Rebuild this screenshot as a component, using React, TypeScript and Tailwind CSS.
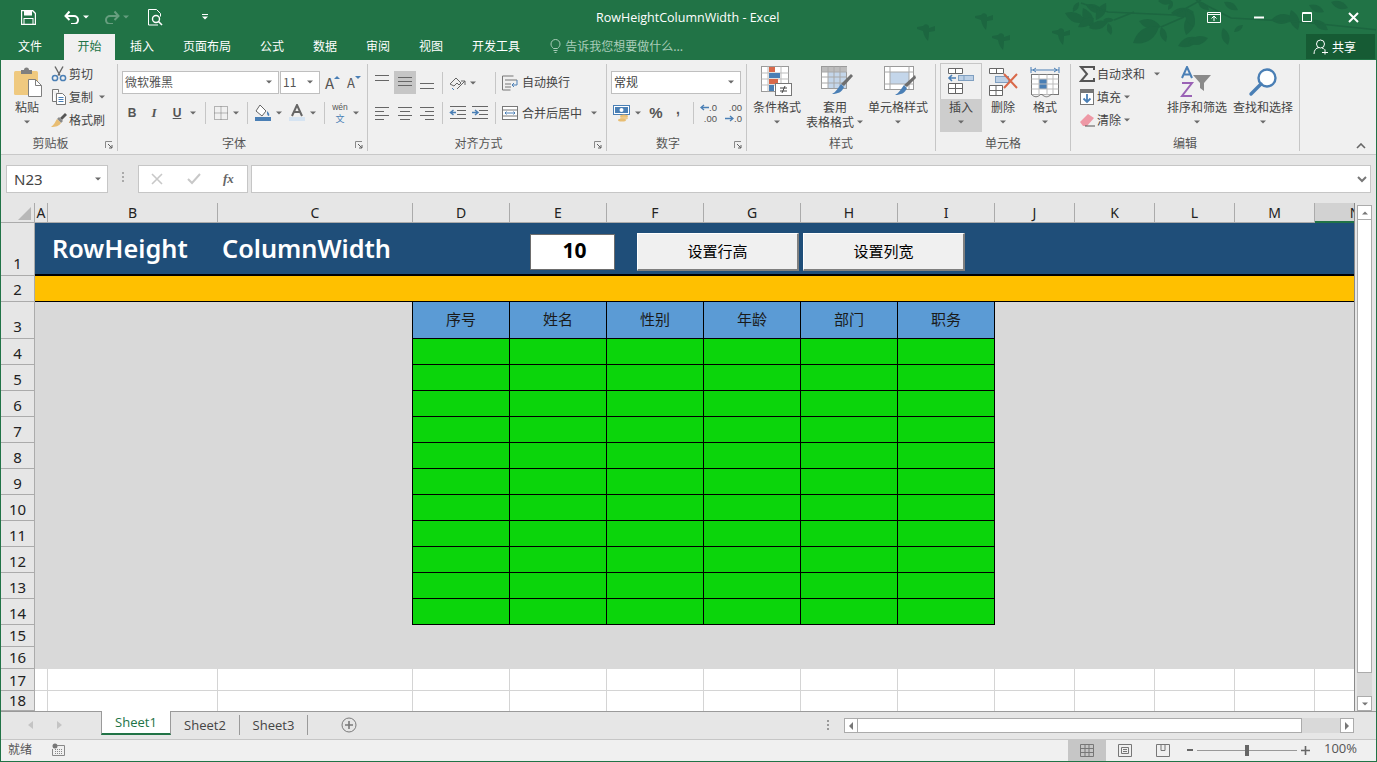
import type { ReactNode } from "react";

const BLUE = "#4a7fb5";

function Caret({ color = "#6a6a6a" }: { color?: string }) {
  return (
    <svg width="8" height="4" viewBox="0 0 8 4" className="shrink-0">
      <path d="M1 0.5h6L4 3.500z" fill={color} />
    </svg>
  );
}

function CaretBox({ className = "" }: { className?: string }) {
  return (
    <span className={`flex w-[8px] justify-center ${className}`}>
      <Caret />
    </span>
  );
}

function Sep({ className = "" }: { className?: string }) {
  return <span className={`h-[22px] w-px shrink-0 bg-[#c6c6c6] ${className}`} />;
}

function Launcher() {
  return (
    <svg width="8" height="8" viewBox="0 0 8 8" className="absolute bottom-[2px] right-[4px]">
      <path d="M0.5 7V0.5H7" fill="none" stroke="#8a8a8a" />
      <path d="M3 3l4 4M7 4v3H4" fill="none" stroke="#5f5f5f" />
    </svg>
  );
}

function Group({ w, label, launcher, children }: { w: string; label: string; launcher?: boolean; children: ReactNode }) {
  return (
    <div className={`relative flex h-[87px] shrink-0 flex-col border-r border-[#c6c6c6] ${w}`}>
      <div className="h-[71px]">{children}</div>
      <div className={`flex h-[16px] items-center justify-center text-[12px] leading-none text-[#555] ${launcher ? "pr-[17px]" : ""}`}>
        {label}
      </div>
      {launcher && <Launcher />}
    </div>
  );
}

function SmallRow({ icon, label, caret, caretMl }: { icon: ReactNode; label: string; caret?: boolean; caretMl?: string }) {
  return (
    <div className="flex h-[23px] items-center">
      <span className="flex w-[18px] justify-center">{icon}</span>
      <span className="ml-[1px] whitespace-nowrap text-[12px] text-[#444]">{label}</span>
      {caret && <CaretBox className={caretMl} />}
    </div>
  );
}

function BigButton({
  w,
  icon,
  lines,
  active,
  inlineCaret,
}: {
  w: string;
  icon: ReactNode;
  lines: string[];
  active?: boolean;
  inlineCaret?: boolean;
}) {
  return (
    <div className={`flex shrink-0 flex-col items-center ${w} ${active ? "-mt-px h-[69px] bg-[#cdcdcd]" : ""}`}>
      <div
        className={`flex w-full items-center justify-center ${
          active ? "h-[36px] border-x border-t border-[#c6c6c6] bg-[#f0f0f0]" : "h-[35px]"
        }`}
      >
        {icon}
      </div>
      <div className="flex h-[15px] items-center whitespace-nowrap text-[12px] text-[#444]">{lines[0]}</div>
      {lines[1] ? (
        <div className="flex h-[15px] items-center whitespace-nowrap text-[12px] text-[#444]">
          {lines[1]}
          {inlineCaret && <CaretBox className="ml-[2px]" />}
        </div>
      ) : (
        <div className="flex h-[15px] items-center">
          <Caret />
        </div>
      )}
    </div>
  );
}

function AlignV({ pos, active }: { pos: "top" | "mid" | "bot"; active?: boolean }) {
  const y = pos === "top" ? [4, 9] : pos === "mid" ? [6, 10, 14] : [12, 17];
  const d = y.map((v) => `M4 ${v}.5h14`).join("");
  return (
    <span className={`flex h-[23px] w-[22px] items-center justify-center ${active ? "bg-[#c6c6c6]" : ""}`}>
      <svg width="22" height="23" viewBox="0 0 22 23">
        <path d={d} stroke="#666" fill="none" />
      </svg>
    </span>
  );
}

function AlignH({ pos }: { pos: "l" | "c" | "r" }) {
  const rows =
    pos === "l"
      ? "M4 5.5h14M4 9.5h9M4 13.5h14M4 17.5h9"
      : pos === "c"
        ? "M4 5.5h14M6 9.5h10M4 13.5h14M6 17.5h10"
        : "M4 5.5h14M9 9.5h9M4 13.5h14M9 17.5h9";
  return (
    <svg width="22" height="23" viewBox="0 0 22 23">
      <path d={rows} stroke="#666" fill="none" />
    </svg>
  );
}

function Indent({ flip }: { flip?: boolean }) {
  return (
    <svg width="18" height="16" viewBox="0 0 18 16">
      <path d="M1 1.500h16M8 5.500h9M8 9.500h9M1 13.500h16" stroke="#666" fill="none" />
      {flip ? (
        <path d="M1 7.500h5M4 5L7 7.500 4 10" stroke={BLUE} strokeWidth="1.5" fill="none" />
      ) : (
        <path d="M7 7.500H2M4.500 5L1.500 7.500l3 2.500" stroke={BLUE} strokeWidth="1.5" fill="none" />
      )}
    </svg>
  );
}

function PasteIcon() {
  return (
    <svg width="32" height="33" viewBox="0 0 32 33">
      <g transform="translate(3 1)">
        <rect x="0" y="5" width="24" height="24" rx="1.5" fill="#efc97f" />
        <path d="M7 4h3a2.500 2.500 0 0 1 5 0h3v4H7z" fill="#7f7f7f" />
        <path d="M14.500 13.500h7l6 6v11h-13z" fill="#fff" stroke="#7f7f7f" />
        <path d="M21.500 13.500v6h6" fill="none" stroke="#7f7f7f" />
      </g>
    </svg>
  );
}

function CutIcon() {
  return (
    <svg width="16" height="16" viewBox="0 0 16 16">
      <path d="M4 0.5l5 9M12 0.5l-5 9" stroke="#666" strokeWidth="1.4" fill="none" />
      <circle cx="4" cy="12" r="2.6" fill="none" stroke={BLUE} strokeWidth="1.5" />
      <circle cx="12" cy="12" r="2.6" fill="none" stroke={BLUE} strokeWidth="1.5" />
    </svg>
  );
}

function CopyIcon() {
  return (
    <svg width="16" height="16" viewBox="0 0 16 16">
      <path d="M1.5 0.5h6v3M5 12.5H1.5v-12" fill="#fff" stroke="#777" />
      <path d="M5.5 4.5h6l3 3v8h-9z" fill="#fff" stroke="#777" />
      <path d="M7.5 8.5h5M7.5 10.5h5M7.5 12.5h5" stroke={BLUE} />
    </svg>
  );
}

function BrushIcon() {
  return (
    <svg width="18" height="16" viewBox="0 0 18 16">
      <path d="M10 6l5-5 2 2-5 5z" fill="#555" />
      <path d="M9 5l4 4-2 2-4-4z" fill="#8a8a8a" />
      <path d="M7 7l4 4c-2 3-5 4-10 4 3-2 4-5 6-8z" fill="#e8bd72" />
    </svg>
  );
}

function BordersIcon() {
  return (
    <svg width="14" height="14" viewBox="0 0 14 14">
      <path d="M0.5 0.5h13v13h-13zM7 0.5v13M0.5 7h13" fill="none" stroke="#777" strokeDasharray="1 1" />
    </svg>
  );
}

function FillIcon() {
  return (
    <svg width="18" height="18" viewBox="0 0 18 18">
      <path d="M6 1l6 6-4 5-6-5z" fill="#fff" stroke="#666" />
      <path d="M13 7c1 1 3 3 2 5-2 0-2-3-2-5z" fill={BLUE} />
      <rect x="1" y="13" width="16" height="4" fill={BLUE} />
    </svg>
  );
}

function ColorAIcon() {
  return (
    <svg width="16" height="18" viewBox="0 0 16 18">
      <rect x="0" y="13" width="16" height="4" fill="#d6e4f2" />
      <path d="M3 12L8 1l5 11M5 8h6" fill="none" stroke="#666" strokeWidth="2" />
    </svg>
  );
}

function OrientIcon() {
  return (
    <svg width="18" height="16" viewBox="0 0 18 16">
      <path d="M1 9l6-6 5 5-2 2-2-2-3 3z" fill="none" stroke="#666" />
      <path d="M8 14L16 6M16 6h-4M16 6v4" fill="none" stroke="#666" />
      <path d="M3 13l2 2" stroke={BLUE} />
    </svg>
  );
}

function WrapIcon() {
  return (
    <svg width="16" height="16" viewBox="0 0 16 16">
      <path d="M0.5 1h11M0.5 1v14h8M3 5h12M3 9h6M3 12h6" fill="none" stroke="#777" />
      <path d="M15 5v5h-5M12 8l-2 2 2 2" fill="none" stroke={BLUE} />
    </svg>
  );
}

function MergeIcon() {
  return (
    <svg width="16" height="16" viewBox="0 0 16 16">
      <rect x="0.5" y="1.5" width="15" height="13" fill="#fff" stroke="#777" />
      <path d="M0.5 5h15M0.5 11h15" stroke="#777" />
      <path d="M3 8h10M4.5 6.5L3 8l1.5 1.5M11.5 6.5L13 8l-1.5 1.5" fill="none" stroke={BLUE} />
    </svg>
  );
}

function MoneyIcon() {
  return (
    <svg width="18" height="17" viewBox="0 0 18 17">
      <rect x="0.5" y="0.5" width="16" height="9" fill="#fff" stroke={BLUE} />
      <rect x="2" y="2" width="13" height="6" fill={BLUE} />
      <circle cx="8.5" cy="5" r="2" fill="#fff" />
      <ellipse cx="11" cy="11" rx="4" ry="1.6" fill="#e8bd72" />
      <ellipse cx="11" cy="13" rx="4" ry="1.6" fill="#efcb8c" />
      <ellipse cx="9" cy="15" rx="4" ry="1.6" fill="#e8bd72" />
    </svg>
  );
}

function DecimalIcon({ more }: { more?: boolean }) {
  return (
    <span className="flex h-[22px] w-[18px] flex-col font-['Liberation_Sans',sans-serif] text-[9.5px] leading-[11px] text-[#555]">
      {more ? (
        <>
          <span className="text-right">.00</span>
          <span className="flex items-center justify-end">
            <svg width="9" height="7" viewBox="0 0 9 7">
              <path d="M0 3.5h7M5 1l3 2.5L5 6" fill="none" stroke={BLUE} strokeWidth="1.3" />
            </svg>
            .0
          </span>
        </>
      ) : (
        <>
          <span className="flex items-center justify-end">
            <svg width="9" height="7" viewBox="0 0 9 7">
              <path d="M9 3.5H2M4 1L1 3.5 4 6" fill="none" stroke={BLUE} strokeWidth="1.3" />
            </svg>
            .0
          </span>
          <span className="text-right">.00</span>
        </>
      )}
    </span>
  );
}

function CondIcon() {
  return (
    <svg width="32" height="32" viewBox="0 0 32 32">
      <rect x="0.5" y="0.5" width="27" height="25" fill="#fff" stroke="#9a9a9a" />
      <path d="M7 0.5v25M20 0.5v25M0.5 7h27M0.5 13h27M0.5 19h27" stroke="#bdbdbd" />
      <rect x="8" y="1" width="6" height="5" fill="#d9694a" />
      <rect x="8" y="7" width="11" height="5" fill={BLUE} />
      <rect x="8" y="13" width="9" height="5" fill="#d9694a" />
      <rect x="8" y="19" width="5" height="6" fill={BLUE} />
      <rect x="14.5" y="17.5" width="16" height="12" fill="#fff" stroke="#777" />
      <path d="M19 22h7M19 25h7M24 20l-3 7" stroke="#444" fill="none" />
    </svg>
  );
}

function TableIcon() {
  return (
    <svg width="32" height="32" viewBox="0 0 32 32" className="ml-[3px]">
      <rect x="0.5" y="0.5" width="25" height="22" fill="#fff" stroke="#9a9a9a" />
      <rect x="1" y="1" width="25" height="5" fill="#bdbdbd" />
      <rect x="7" y="6" width="18" height="16" fill="#c4d6ea" />
      <path d="M7 0.5v22M13 0.5v22M19 0.5v22M0.5 6h25M0.5 11h25M0.5 17h25" stroke="#a8a8a8" />
      <path d="M30 8l2 2-9 10-3-2z" fill="#6e6e6e" />
      <path d="M20 18l3 3c-2 5-6 7-12 7 4-2 6-6 9-10z" fill={BLUE} />
    </svg>
  );
}

function CellStyleIcon() {
  return (
    <svg width="32" height="32" viewBox="0 0 32 32" className="ml-[4px]">
      <rect x="0.5" y="0.5" width="29" height="23" fill="#fff" stroke="#9a9a9a" />
      <rect x="6" y="6" width="19" height="12" fill="#c4d6ea" />
      <path d="M6 0.5v23M25 0.5v23M0.5 6h29M0.5 18h29" stroke="#a8a8a8" />
      <path d="M31 9l1 3-9 9-3-2z" fill="#6e6e6e" />
      <path d="M20 19l3 3c-2 5-6 7-12 7 4-2 6-6 9-10z" fill={BLUE} />
    </svg>
  );
}

function InsertIcon() {
  return (
    <svg width="28" height="30" viewBox="0 0 28 30">
      <path d="M1.5 1.5h14v5h-14zM8.5 1.5v5M1.5 16.5h14v10h-14zM8.5 16.5v10M1.5 21.5h14" fill="#fff" stroke="#666" />
      <rect x="11.5" y="8.5" width="15" height="5" fill="#bcd0e6" stroke="#7f9fc0" />
      <path d="M17 8.5v5" stroke="#7f9fc0" />
      <path d="M9 11H2M5 8l-3 3 3 3" fill="none" stroke={BLUE} strokeWidth="1.6" />
    </svg>
  );
}

function DeleteIcon() {
  return (
    <svg width="30" height="30" viewBox="0 0 30 30">
      <path d="M1.5 1.5h14v5h-14zM8.5 1.5v5M1.5 18.5h13v10h-13zM8 18.5v10M1.5 23.5h13" fill="#fff" stroke="#666" />
      <rect x="7.5" y="9.5" width="13" height="6" fill="#bcd0e6" stroke="#7f9fc0" />
      <path d="M16 7l13 14M29 7L16 21" stroke="#d9694a" strokeWidth="2" />
    </svg>
  );
}

function FormatIcon() {
  return (
    <svg width="30" height="32" viewBox="0 0 30 32">
      <path d="M1 4h28M1 1v6M29 1v6" stroke={BLUE} fill="none" />
      <path d="M6 2L3 4l3 2M24 2l3 2-3 2" stroke={BLUE} fill="none" />
      <rect x="1.5" y="8.5" width="27" height="20" fill="#fff" stroke="#777" />
      <rect x="9" y="13" width="8" height="10" fill={BLUE} />
      <path d="M9 8.5v20M17 8.5v20M23 8.5v20M1.5 13h27M1.5 18h27M1.5 23h27" stroke="#bdbdbd" fill="none" />
      <path d="M1.5 28.5c3 3 6 3 9 0M12 28.5c3 3 6 3 9 0" stroke="#777" fill="#f0f0f0" />
    </svg>
  );
}

function SumIcon() {
  return (
    <svg width="16" height="16" viewBox="0 0 16 16">
      <path d="M15 4V1H2l6 7-6 7h13v-3" fill="none" stroke="#555" strokeWidth="2" />
    </svg>
  );
}

function FillDownIcon() {
  return (
    <svg width="14" height="16" viewBox="0 0 14 16">
      <rect x="0.5" y="0.5" width="13" height="15" fill="#fff" stroke="#777" />
      <rect x="1" y="1" width="12" height="3" fill="#777" />
      <path d="M7 5v8M3.5 9.5L7 13l3.5-3.5" fill="none" stroke={BLUE} strokeWidth="1.8" />
    </svg>
  );
}

function EraserIcon() {
  return (
    <svg width="16" height="14" viewBox="0 0 16 14">
      <path d="M1 9l8-8 6 4-7 8H4z" fill="#ee98a5" />
      <path d="M6 13h10" stroke="#555" />
    </svg>
  );
}

function SortIcon() {
  return (
    <svg width="34" height="32" viewBox="0 0 34 32">
      <path d="M2 12L7 1l5 11M4 8.5h6" fill="none" stroke={BLUE} strokeWidth="2" />
      <path d="M2 17h10L2 30h10" fill="none" stroke="#9a62b5" strokeWidth="2" />
      <path d="M13 9h18l-7 8v8l-4-3v-5z" fill="#8a8a8a" />
    </svg>
  );
}

function SearchIcon() {
  return (
    <svg width="30" height="30" viewBox="0 0 30 30">
      <circle cx="19" cy="11" r="8.5" fill="#fff" stroke={BLUE} strokeWidth="2.4" />
      <path d="M13 17L3 27" stroke={BLUE} strokeWidth="3.4" strokeLinecap="round" />
    </svg>
  );
}

function WinIcon({ kind }: { kind: "ribbon" | "min" | "max" | "close" }) {
  if (kind === "ribbon")
    return (
      <svg width="14" height="11" viewBox="0 0 14 11">
        <path d="M0.5 0.5h13v10H0.5zM0 2.5h14M7 9V4.5M4.5 6.5L7 4l2.5 2.5" fill="none" stroke="#fff" />
      </svg>
    );
  if (kind === "min")
    return (
      <svg width="10" height="11" viewBox="0 0 10 11">
        <path d="M0 5.5h10" stroke="#fff" strokeWidth="2" />
      </svg>
    );
  if (kind === "max")
    return (
      <svg width="10" height="10" viewBox="0 0 10 10">
        <path d="M0.5 0.5h9v9h-9zM0 1.5h10" fill="none" stroke="#fff" />
      </svg>
    );
  return (
    <svg width="11" height="11" viewBox="0 0 11 11">
      <path d="M1 1l9 9M10 1l-9 9" stroke="#fff" strokeWidth="2" />
    </svg>
  );
}

// leaves of the title bar pattern, from and to points of each leaf
const leaves = [
  [1064, 13, 1085, 22], [1082, 8, 1092, 28], [1077, 27, 1093, 18], [1085, 5, 1102, 12], [1105, 3, 1095, 20],
  [1088, 28, 1107, 22], [1102, 20, 1113, 20], [1107, 23, 1110, 35], [1078, 2, 1072, 12], [1138, 21, 1160, 27],
  [1158, 27, 1132, 43], [1160, 27, 1165, 42], [1170, 13, 1193, 12], [1192, 12, 1185, 35], [1198, 38, 1177, 46],
  [1157, 1, 1172, 2], [1172, 2, 1167, 10], [1223, 2, 1237, 10], [1222, 28, 1227, 45], [1233, 32, 1242, 25],
  [1270, 20, 1293, 18], [1290, 10, 1297, 30], [1308, 5, 1323, 12], [1312, 20, 1327, 30], [1330, 2, 1347, 8],
  [1185, 10, 1193, 27], [1187, 43, 1207, 38], [1197, 2, 1208, 10],
];

function leafPath([x1, y1, x2, y2]: number[]) {
  const mx = (x1 + x2) / 2;
  const my = (y1 + y2) / 2;
  const nx = (y2 - y1) * 0.42;
  const ny = (x1 - x2) * 0.42;
  return `M${x1} ${y1}Q${mx + nx} ${my + ny} ${x2} ${y2}Q${mx - nx} ${my - ny} ${x1} ${y1}Z`;
}

function Bird({ x, y }: { x: number; y: number }) {
  return (
    <path
      transform={`translate(${x} ${y})`}
      d="M-6 -1L0 -2A3.500 3.500 0 0 1 6 -2L6 0 12 -2 12 3 6 4Q6 9 5 13 1 9 0 3L-6 1Z"
    />
  );
}

function TitleDecor() {
  return (
    <svg className="pointer-events-none absolute left-0 top-0" width="1377" height="60" viewBox="0 0 1377 60">
      <g fill="#1c6640">
        {leaves.map((l, i) => (
          <path key={i} d={leafPath(l)} />
        ))}
        <Bird x={1057} y={32} />
        <Bird x={997} y={37} />
        <Bird x={980} y={17} />
        <Bird x={922} y={28} />
      </g>
      <path
        d="M1080 3L1107 12L1173 15L1200 0M1133 12L1113 20M1183 17L1160 27M1195 0L1230 18L1300 22L1377 30"
        fill="none"
        stroke="#1c6640"
        strokeWidth="1.5"
      />
    </svg>
  );
}

function TitleBar() {
  return (
    <div className="relative flex h-[34px] items-center text-white">
      <span className="ml-[20px] flex w-[15px] justify-center">
        <svg width="15" height="15" viewBox="0 0 15 15">
          <path d="M0.5 0.5h11l3 3v11H0.5z" fill="none" stroke="#fff" strokeWidth="1.4" />
          <rect x="3" y="1" width="8" height="4.5" fill="#fff" />
          <rect x="3" y="8.5" width="9" height="6" fill="none" stroke="#fff" />
        </svg>
      </span>
      <span className="ml-[28px] flex w-[16px] justify-center">
        <svg width="16" height="14" viewBox="0 0 16 14">
          <path d="M2 6h8a4 4 0 0 1 0 8H7M5.5 1.5L1.5 6l4 4" fill="none" stroke="#fff" strokeWidth="2" />
        </svg>
      </span>
      <span className="ml-[2px] flex w-[8px] justify-center">
        <Caret color="#fff" />
      </span>
      <span className="ml-[14px] flex w-[16px] justify-center opacity-40">
        <svg width="16" height="14" viewBox="0 0 16 14">
          <path d="M14 6H6a4 4 0 0 0 0 8h3M10.5 1.5l4 4.5-4 4" fill="none" stroke="#cfe0d6" strokeWidth="2" />
        </svg>
      </span>
      <span className="ml-[2px] flex w-[8px] justify-center opacity-30">
        <Caret color="#fff" />
      </span>
      <span className="ml-[18px] flex w-[16px] justify-center">
        <svg width="16" height="17" viewBox="0 0 16 17">
          <path d="M10 16H0.5V0.5h8l4 4v3" fill="none" stroke="#fff" />
          <circle cx="8" cy="10" r="3.5" fill="none" stroke="#fff" strokeWidth="1.4" />
          <path d="M10.5 12.5l3.5 3.5" stroke="#fff" strokeWidth="1.6" />
        </svg>
      </span>
      <span className="ml-[37px] flex w-[8px] flex-col items-center gap-[1px]">
        <span className="h-px w-[6px] bg-white" />
        <Caret color="#fff" />
      </span>
      <span className="absolute left-[595px] top-[10px] whitespace-nowrap font-['Open_Sans',sans-serif] text-[12.500px] leading-[16px] text-white">
        RowHeightColumnWidth - Excel
      </span>
      <div className="ml-auto flex items-center">
        <span className="flex w-[14px] justify-center">
          <WinIcon kind="ribbon" />
        </span>
        <span className="ml-[33px] flex w-[10px] justify-center">
          <WinIcon kind="min" />
        </span>
        <span className="ml-[38px] flex w-[10px] justify-center">
          <WinIcon kind="max" />
        </span>
        <span className="ml-[36px] mr-[17px] flex w-[11px] justify-center">
          <WinIcon kind="close" />
        </span>
      </div>
    </div>
  );
}

function TabRow() {
  const tabs = [
    { name: "插入", cls: "ml-[15px]" },
    { name: "页面布局", cls: "ml-[29px]" },
    { name: "公式", cls: "ml-[29px]" },
    { name: "数据", cls: "ml-[29px]" },
    { name: "审阅", cls: "ml-[29px]" },
    { name: "视图", cls: "ml-[29px]" },
    { name: "开发工具", cls: "ml-[29px]" },
  ];
  return (
    <div className="relative flex h-[26px] items-start text-[12px] leading-[24px] text-white">
      <span className="ml-[17px]">文件</span>
      <span className="ml-[22px] flex h-[26px] w-[51px] justify-center bg-[#f0f0f0] text-[#217346]">开始</span>
      {tabs.map((t) => (
        <span key={t.name} className={t.cls}>
          {t.name}
        </span>
      ))}
      <span className="ml-[29px] mt-[5px] flex w-[12px] justify-center">
        <svg width="11" height="14" viewBox="0 0 11 14">
          <path d="M3.5 9.5C2 8 1 7 1 5a4.5 4.5 0 0 1 9 0c0 2-1 3-2.500 4.500zM3.500 11.500h4M4.500 13.500h2" fill="none" stroke="#a9cdb9" />
        </svg>
      </span>
      <span className="ml-[4px] text-[#a9cdb9]">告诉我您想要做什么...</span>
      <div className="ml-auto mr-px flex h-[25px] w-[69px] items-center bg-[#165b34] pl-[7px]">
        <svg width="16" height="16" viewBox="0 0 16 16">
          <circle cx="7.500" cy="5" r="4" fill="none" stroke="#fff" />
          <path d="M1 15c0-4 2-6 5-6.500M9 9c1 .3 2 .8 2.500 1.500M9 13.500h6M12 10.500v5" fill="none" stroke="#fff" />
        </svg>
        <span className="ml-[3px] text-white">共享</span>
      </div>
    </div>
  );
}

function Ribbon() {
  return (
    <div className="relative flex h-[95px] border-b border-[#c8c8c8] bg-[#f0f0f0] pt-[4px]">
      <Group w="w-[117px]" label="剪贴板" launcher>
        <div className="flex">
          <BigButton w="w-[44px] ml-[4px]" icon={<PasteIcon />} lines={["粘贴"]} />
          <div className="-mt-[2px] ml-[1px]">
            <SmallRow icon={<CutIcon />} label="剪切" />
            <SmallRow icon={<CopyIcon />} label="复制" caret caretMl="ml-[5px]" />
            <SmallRow icon={<BrushIcon />} label="格式刷" />
          </div>
        </div>
      </Group>
      <Group w="w-[250px]" label="字体" launcher>
        <div className="mt-[7px] flex h-[23px] items-center">
          <div className="ml-[4px] flex h-[23px] w-[157px] items-center justify-between border border-[#bfbfbf] bg-white pb-[2px] pl-[2px] pr-[5px] text-[12px] text-[#555]">
            微软雅黑
            <Caret />
          </div>
          <div className="ml-px flex h-[23px] w-[40px] items-center justify-between border border-[#bfbfbf] bg-white pb-[2px] pl-[2px] pr-[5px] text-[12px] text-[#555]">
            11
            <Caret />
          </div>
          <span className="ml-[5px] flex w-[16px] text-[15px] leading-none text-[#555]">
            A
            <svg width="6" height="3" viewBox="0 0 6 3" className="mt-px">
              <path d="M0 3h6L3 0z" fill={BLUE} />
            </svg>
          </span>
          <span className="ml-[6px] flex w-[16px] items-end text-[13px] leading-none text-[#555]">
            A
            <svg width="6" height="3" viewBox="0 0 6 3" className="mb-[10px]">
              <path d="M0 0h6L3 3z" fill={BLUE} />
            </svg>
          </span>
        </div>
        <div className="mt-[8px] flex h-[22px] items-center text-[#555]">
          <span className="ml-[3px] w-[22px] text-center font-['Liberation_Sans',sans-serif] text-[12px] font-bold">B</span>
          <span className="w-[22px] text-center font-['Liberation_Serif',serif] text-[13px] font-bold italic">I</span>
          <span className="w-[24px] text-center font-['Liberation_Sans',sans-serif] text-[12px] font-bold underline">U</span>
          <CaretBox />
          <Sep className="ml-[8px]" />
          <span className="ml-[7px] flex w-[16px] justify-center">
            <BordersIcon />
          </span>
          <CaretBox className="ml-[3px]" />
          <Sep className="ml-[7px]" />
          <span className="ml-[6px] flex w-[18px] justify-center">
            <FillIcon />
          </span>
          <CaretBox className="ml-[3px]" />
          <span className="ml-[6px] flex w-[16px] justify-center">
            <ColorAIcon />
          </span>
          <CaretBox className="ml-[4px]" />
          <Sep className="ml-[7px]" />
          <span className="ml-[5px] flex h-[22px] w-[20px] flex-col items-center text-[9px] text-[#555]">
            <span className="font-['Liberation_Sans',sans-serif] text-[8.500px] leading-[10px]">wén</span>
            <span className="leading-[13px] text-[#4a7fb5]">文</span>
          </span>
          <CaretBox className="ml-[2px]" />
        </div>
      </Group>
      <Group w="w-[239px]" label="对齐方式" launcher>
        <div className="mt-[7px] flex h-[23px] items-center">
          <span className="ml-[3px] flex">
            <AlignV pos="top" />
            <span className="ml-px">
              <AlignV pos="mid" active />
            </span>
            <AlignV pos="bot" />
          </span>
          <Sep className="ml-[4px]" />
          <span className="ml-[6px] flex w-[18px] justify-center">
            <OrientIcon />
          </span>
          <CaretBox className="ml-[2px]" />
          <Sep className="ml-[18px]" />
          <span className="ml-[6px] flex w-[16px] justify-center">
            <WrapIcon />
          </span>
          <span className="ml-[4px] pb-[2px] text-[12px] text-[#444]">自动换行</span>
        </div>
        <div className="mt-[8px] flex h-[22px] items-center">
          <span className="ml-[3px] flex">
            <AlignH pos="l" />
            <span className="ml-px">
              <AlignH pos="c" />
            </span>
            <AlignH pos="r" />
          </span>
          <Sep className="ml-[4px]" />
          <span className="ml-[6px] flex w-[18px] justify-center">
            <Indent />
          </span>
          <span className="ml-[4px] flex w-[18px] justify-center">
            <Indent flip />
          </span>
          <Sep className="ml-[6px]" />
          <span className="ml-[6px] flex w-[16px] justify-center">
            <MergeIcon />
          </span>
          <span className="ml-[4px] text-[12px] text-[#444]">合并后居中</span>
          <CaretBox className="ml-[8px]" />
        </div>
      </Group>
      <Group w="w-[140px]" label="数字" launcher>
        <div className="ml-[4px] mt-[7px] flex h-[23px] w-[130px] items-center justify-between border border-[#bfbfbf] bg-white pb-[2px] pl-[2px] pr-[5px] text-[12px] text-[#444]">
          常规
          <Caret />
        </div>
        <div className="mt-[8px] flex h-[22px] items-center text-[#555]">
          <span className="ml-[5px] flex w-[20px] justify-center">
            <MoneyIcon />
          </span>
          <CaretBox className="ml-[2px]" />
          <span className="ml-[6px] w-[16px] text-center font-['Liberation_Sans',sans-serif] text-[15px] font-bold">%</span>
          <span className="-mt-[8px] ml-[8px] w-[12px] text-center font-['Liberation_Sans',sans-serif] text-[14px] font-bold">,</span>
          <Sep className="ml-[9px]" />
          <span className="ml-[5px]">
            <DecimalIcon />
          </span>
          <span className="ml-[7px]">
            <DecimalIcon more />
          </span>
        </div>
      </Group>
      <Group w="w-[189px]" label="样式">
        <div className="flex">
          <BigButton w="w-[56px] ml-[2px]" icon={<CondIcon />} lines={["条件格式"]} />
          <BigButton w="w-[60px]" icon={<TableIcon />} lines={["套用", "表格格式"]} inlineCaret />
          <BigButton w="w-[66px]" icon={<CellStyleIcon />} lines={["单元格样式"]} />
        </div>
      </Group>
      <Group w="w-[135px]" label="单元格">
        <div className="flex">
          <span className="w-[4px]" />
          <BigButton w="w-[42px]" icon={<InsertIcon />} lines={["插入"]} active />
          <BigButton w="w-[42px]" icon={<DeleteIcon />} lines={["删除"]} />
          <BigButton w="w-[42px]" icon={<FormatIcon />} lines={["格式"]} />
        </div>
      </Group>
      <Group w="w-[229px]" label="编辑">
        <div className="flex">
          <div className="-mt-[2px] ml-[7px] w-[86px]">
            <SmallRow icon={<SumIcon />} label="自动求和" caret caretMl="ml-[8px]" />
            <SmallRow icon={<FillDownIcon />} label="填充" caret caretMl="ml-[2px]" />
            <SmallRow icon={<EraserIcon />} label="清除" caret caretMl="ml-[2px]" />
          </div>
          <BigButton w="w-[66px]" icon={<SortIcon />} lines={["排序和筛选"]} />
          <BigButton w="w-[66px]" icon={<SearchIcon />} lines={["查找和选择"]} />
        </div>
      </Group>
      <svg width="10" height="6" viewBox="0 0 10 6" className="absolute right-[10px] top-[83px]">
        <path d="M1 5l4-4 4 4" fill="none" stroke="#666" strokeWidth="1.6" />
      </svg>
    </div>
  );
}

function FormulaBar() {
  return (
    <div className="flex h-[48px] items-start bg-[#e6e6e6] pt-[10px]">
      <div className="ml-[5px] flex h-[28px] w-[102px] items-center justify-between border border-[#c6c6c6] bg-white pl-[7px] pr-[5px] font-['Noto_Sans',sans-serif] text-[15px] text-[#444]">
        N23
        <Caret />
      </div>
      <span className="ml-[14px] mt-[7px] flex w-[3px] flex-col gap-[2px]">
        <span className="h-[2px] w-[2px] bg-[#aaa]" />
        <span className="h-[2px] w-[2px] bg-[#aaa]" />
        <span className="h-[2px] w-[2px] bg-[#aaa]" />
      </span>
      <div className="ml-[13px] flex h-[28px] w-[110px] items-center border border-[#c6c6c6] bg-white">
        <svg width="12" height="12" viewBox="0 0 12 12" className="ml-[12px]">
          <path d="M1 1l10 10M11 1L1 11" stroke="#c8c8c8" strokeWidth="1.6" />
        </svg>
        <svg width="14" height="12" viewBox="0 0 14 12" className="ml-[24px]">
          <path d="M1 6l4 4 8-9" fill="none" stroke="#c8c8c8" strokeWidth="2" />
        </svg>
        <span className="ml-[22px] font-['Liberation_Serif',serif] text-[13px] font-bold italic text-[#666]">fx</span>
      </div>
      <div className="ml-[3px] flex h-[28px] w-[1120px] items-center justify-end border border-[#c6c6c6] bg-white pr-[3px]">
        <svg width="10" height="7" viewBox="0 0 10 7">
          <path d="M1 1l4 4 4-4" fill="none" stroke="#777" strokeWidth="2" />
        </svg>
      </div>
    </div>
  );
}

const columns = [
  { name: "A", w: "w-[13px]" },
  { name: "B", w: "w-[170px]" },
  { name: "C", w: "w-[195px]" },
  { name: "D", w: "w-[97px]" },
  { name: "E", w: "w-[97px]" },
  { name: "F", w: "w-[97px]" },
  { name: "G", w: "w-[97px]" },
  { name: "H", w: "w-[97px]" },
  { name: "I", w: "w-[97px]" },
  { name: "J", w: "w-[80px]" },
  { name: "K", w: "w-[80px]" },
  { name: "L", w: "w-[80px]" },
  { name: "M", w: "w-[80px]" },
];

const rowHeads = [
  { n: 1, h: "h-[53px] pb-[2px]" },
  { n: 2, h: "h-[26px] pb-[2px]" },
  { n: 3, h: "h-[37px] pb-[2px]" },
  { n: 4, h: "h-[26px] pb-px" },
  { n: 5, h: "h-[26px] pb-px" },
  { n: 6, h: "h-[26px] pb-px" },
  { n: 7, h: "h-[26px] pb-px" },
  { n: 8, h: "h-[26px] pb-px" },
  { n: 9, h: "h-[26px] pb-px" },
  { n: 10, h: "h-[26px] pb-px" },
  { n: 11, h: "h-[26px] pb-px" },
  { n: 12, h: "h-[26px] pb-px" },
  { n: 13, h: "h-[26px] pb-px" },
  { n: 14, h: "h-[26px] pb-px" },
  { n: 15, h: "h-[22px] pb-px" },
  { n: 16, h: "h-[22px] pb-px" },
  { n: 17, h: "h-[22px]" },
  { n: 18, h: "h-[20px]" },
];

const tableHead = ["序号", "姓名", "性别", "年龄", "部门", "职务"];
const HEAD_FONT = "font-['Noto_Sans',sans-serif]";

function ColumnHeader() {
  return (
    <div className={`flex h-[20px] ${HEAD_FONT} text-[14px] leading-[20px] text-[#222]`}>
      <div className="flex w-[34px] shrink-0 items-end justify-end border-b border-r border-[#ababab] pb-[2px] pr-[3px]">
        <svg width="13" height="13" viewBox="0 0 13 13">
          <path d="M13 0v13H0z" fill="#b8b8b8" />
        </svg>
      </div>
      {columns.map((c) => (
        <div key={c.name} className={`shrink-0 border-b border-r border-[#ababab] text-center ${c.w}`}>
          {c.name}
        </div>
      ))}
      <div className="w-[39px] shrink-0 overflow-hidden border-b-2 border-[#217346] bg-[#d2d2d2]">
        <div className="w-[80px] text-center">N</div>
      </div>
    </div>
  );
}

function RowHeader() {
  return (
    <div className={`w-[34px] shrink-0 ${HEAD_FONT} text-[15px] leading-[20px] text-[#222]`}>
      {rowHeads.map((r) => (
        <div key={r.n} className={`flex items-end justify-center border-b border-r border-[#ababab] ${r.h}`}>
          {r.n}
        </div>
      ))}
    </div>
  );
}

function Banner() {
  return (
    <div className="flex h-[53px] items-center border-b-2 border-black bg-[#1f4e79] pt-[6px]">
      <span className="-mt-[5px] ml-[17px] w-[170px] font-['Noto_Sans',sans-serif] text-[25.300px] font-semibold leading-none text-white">RowHeight</span>
      <span className="-mt-[5px] w-[308px] font-['Noto_Sans',sans-serif] text-[25.300px] font-semibold leading-none text-white">ColumnWidth</span>
      <div className="flex h-[36px] w-[85px] items-center justify-center border border-[#6d6d6d] bg-white pb-px pl-[4px] font-['Noto_Sans',sans-serif] text-[21px] font-bold text-black">
        10
      </div>
      <button className="ml-[22px] h-[38px] w-[162px] border-b-2 border-l border-r-2 border-t border-b-[#7f7f7f] border-l-white border-r-[#7f7f7f] border-t-white bg-[#f0f0f0] text-[15px] text-black">
        设置行高
      </button>
      <button className="ml-[4px] h-[38px] w-[162px] border-b-2 border-l border-r-2 border-t border-b-[#7f7f7f] border-l-white border-r-[#7f7f7f] border-t-white bg-[#f0f0f0] text-[15px] text-black">
        设置列宽
      </button>
    </div>
  );
}

function DataTable() {
  const rows = Array.from({ length: 11 });
  return (
    <div className="ml-[377px] grid w-[583px] grid-cols-[repeat(6,97px)] border-l border-black">
      {tableHead.map((h) => (
        <div key={h} className="flex h-[37px] items-center justify-center border-b border-r border-black bg-[#5b9bd5] pb-[2px] text-[15px] text-[#1a1a1a]">
          {h}
        </div>
      ))}
      {rows.map((_, i) =>
        tableHead.map((h) => <div key={`${i}-${h}`} className="h-[26px] border-b border-r border-black bg-[#0bd50b]" />),
      )}
    </div>
  );
}

function BlankRow({ h }: { h: string }) {
  return (
    <div className={`flex bg-white ${h}`}>
      {columns.map((c) => (
        <div key={c.name} className={`h-full shrink-0 border-r border-[#d4d4d4] ${c.w}`} />
      ))}
    </div>
  );
}

function VScroll() {
  return (
    <div className="flex w-[20px] shrink-0 flex-col items-center pr-[1px] pt-[2px]">
      <div className="flex h-[15px] w-[15px] shrink-0 items-center justify-center border border-[#ababab] bg-white">
        <svg width="8" height="4" viewBox="0 0 8 4">
          <path d="M1 3.500h6L4 0.500z" fill="#777" />
        </svg>
      </div>
      <div className="flex h-[477px] w-[15px] flex-col bg-[#d9d9d9]">
        <div className="h-[453px] border-x border-b border-[#ababab] bg-white" />
      </div>
      <div className="flex h-[15px] w-[15px] shrink-0 items-center justify-center border border-[#ababab] bg-white">
        <Caret color="#777" />
      </div>
    </div>
  );
}

function Sheet() {
  return (
    <div className="flex h-[508px] bg-[#e6e6e6]">
      <div className="w-[1354px] shrink-0 border-r border-[#8a8a8a]">
        <ColumnHeader />
        <div className="flex">
          <RowHeader />
          <div className="w-[1319px] overflow-hidden">
            <Banner />
            <div className="h-[26px] border-b border-black bg-[#ffc000]" />
            <div className="h-[367px] bg-[#d9d9d9]">
              <DataTable />
            </div>
            <BlankRow h="h-[22px] border-b border-[#d4d4d4]" />
            <BlankRow h="h-[20px]" />
          </div>
        </div>
      </div>
      <VScroll />
    </div>
  );
}

function SheetTabs() {
  return (
    <div className="flex h-[28px] bg-[#e6e6e6] text-[#444]">
      <div className="flex w-[100px] items-center border-t border-[#9a9a9a] pb-[2px]">
        <svg width="5" height="8" viewBox="0 0 5 8" className="ml-[27px]">
          <path d="M5 0v8L0 4z" fill="#c4c4c4" />
        </svg>
        <svg width="5" height="8" viewBox="0 0 5 8" className="ml-[24px]">
          <path d="M0 0v8l5-4z" fill="#c4c4c4" />
        </svg>
      </div>
      <div className="flex h-[24px] w-[70px] items-center justify-center border-x border-b-2 border-x-[#9a9a9a] border-b-[#217346] bg-white pt-[2px] font-['Open_Sans',sans-serif] text-[13px] text-[#217346]">
        Sheet1
      </div>
      <div className="flex flex-1 items-start border-t border-[#9a9a9a] pt-[3px] font-['Open_Sans',sans-serif] text-[13px]">
        <span className="flex h-[20px] w-[69px] items-center justify-center border-r border-[#9a9a9a] pt-px">Sheet2</span>
        <span className="flex h-[20px] w-[68px] items-center justify-center border-r border-[#9a9a9a] pt-px">Sheet3</span>
        <svg width="16" height="16" viewBox="0 0 16 16" className="ml-[33px] mt-[2px]">
          <circle cx="8" cy="8" r="7" fill="none" stroke="#7a7a7a" />
          <path d="M4 8h8M8 4v8" stroke="#7a7a7a" strokeWidth="1.6" />
        </svg>
        <span className="ml-[470px] mt-[5px] flex w-[2px] flex-col gap-[2px]">
          <span className="h-[2px] w-[2px] bg-[#999]" />
          <span className="h-[2px] w-[2px] bg-[#999]" />
          <span className="h-[2px] w-[2px] bg-[#999]" />
        </span>
        <div className="ml-[15px] mt-[3px] flex h-[15px] w-[510px]">
          <div className="flex h-[15px] w-[14px] items-center justify-center border border-[#ababab] bg-white">
            <svg width="4" height="8" viewBox="0 0 4 8">
              <path d="M4 0v8L0 4z" fill="#777" />
            </svg>
          </div>
          <div className="h-[15px] w-[444px] border-y border-r border-[#ababab] bg-white" />
          <div className="h-[15px] w-[38px] bg-[#d9d9d9]" />
          <div className="flex h-[15px] w-[14px] items-center justify-center border border-[#ababab] bg-white">
            <svg width="4" height="8" viewBox="0 0 4 8">
              <path d="M0 0v8l4-4z" fill="#777" />
            </svg>
          </div>
        </div>
      </div>
    </div>
  );
}

function StatusBar() {
  return (
    <div className="flex h-[22px] items-center border-t border-[#c6c6c6] bg-[#f0f0f0] text-[12px] text-[#555]">
      <span className="ml-[7px] pb-[3px]">就绪</span>
      <svg width="13" height="13" viewBox="0 0 13 13" className="mb-[2px] ml-[20px]">
        <circle cx="3" cy="3" r="2.500" fill="#777" />
        <path d="M5 2.500h7.500v10H.5V6" fill="none" stroke="#888" />
        <path d="M3 6.500h8M3 8.500h8M3 10.500h8" stroke="#888" strokeDasharray="1 1" />
      </svg>
      <div className="ml-auto flex h-full items-center">
        <span className="flex h-full w-[38px] items-center justify-center bg-[#c6c6c6] pb-px">
          <svg width="14" height="13" viewBox="0 0 14 13">
            <path d="M0.5 0.5h13v12H.5zM5 0.5v12M9 0.5v12M.5 4.500h13M.5 8.500h13" fill="none" stroke="#777" />
          </svg>
        </span>
        <svg width="14" height="13" viewBox="0 0 14 13" className="mb-px ml-[12px]">
          <path d="M0.5 0.5h13v12H.5z" fill="none" stroke="#777" />
          <path d="M3.500 3.500h7v6h-7zM5 5.500h4M5 7.500h4" fill="none" stroke="#777" />
        </svg>
        <svg width="14" height="13" viewBox="0 0 14 13" className="mb-px ml-[24px]">
          <path d="M0.5 0.5h13v12H.5zM5 0.5v6h4v-6" fill="none" stroke="#777" />
        </svg>
        <span className="mb-px ml-[17px] h-[2px] w-[6px] bg-[#666]" />
        <div className="mb-px ml-[4px] flex h-px w-[100px] items-center justify-center bg-[#999]">
          <span className="h-[11px] w-[4px] shrink-0 bg-[#666]" />
        </div>
        <svg width="9" height="9" viewBox="0 0 9 9" className="mb-px ml-[4px]">
          <path d="M0 4.500h9M4.500 0v9" stroke="#666" strokeWidth="1.6" />
        </svg>
        <span className="ml-[14px] mr-[20px] w-[32px] whitespace-nowrap pb-[3px] font-['Open_Sans',sans-serif] text-[13px] text-[#555]">100%</span>
      </div>
    </div>
  );
}

export default function App() {
  return (
    <div className="relative h-[762px] w-[1377px] overflow-hidden border-x border-b border-[#217346] bg-[#217346] font-['Noto_Sans_CJK_SC','Noto_Sans',sans-serif]">
      <TitleDecor />
      <TitleBar />
      <TabRow />
      <Ribbon />
      <FormulaBar />
      <Sheet />
      <SheetTabs />
      <StatusBar />
    </div>
  );
}
